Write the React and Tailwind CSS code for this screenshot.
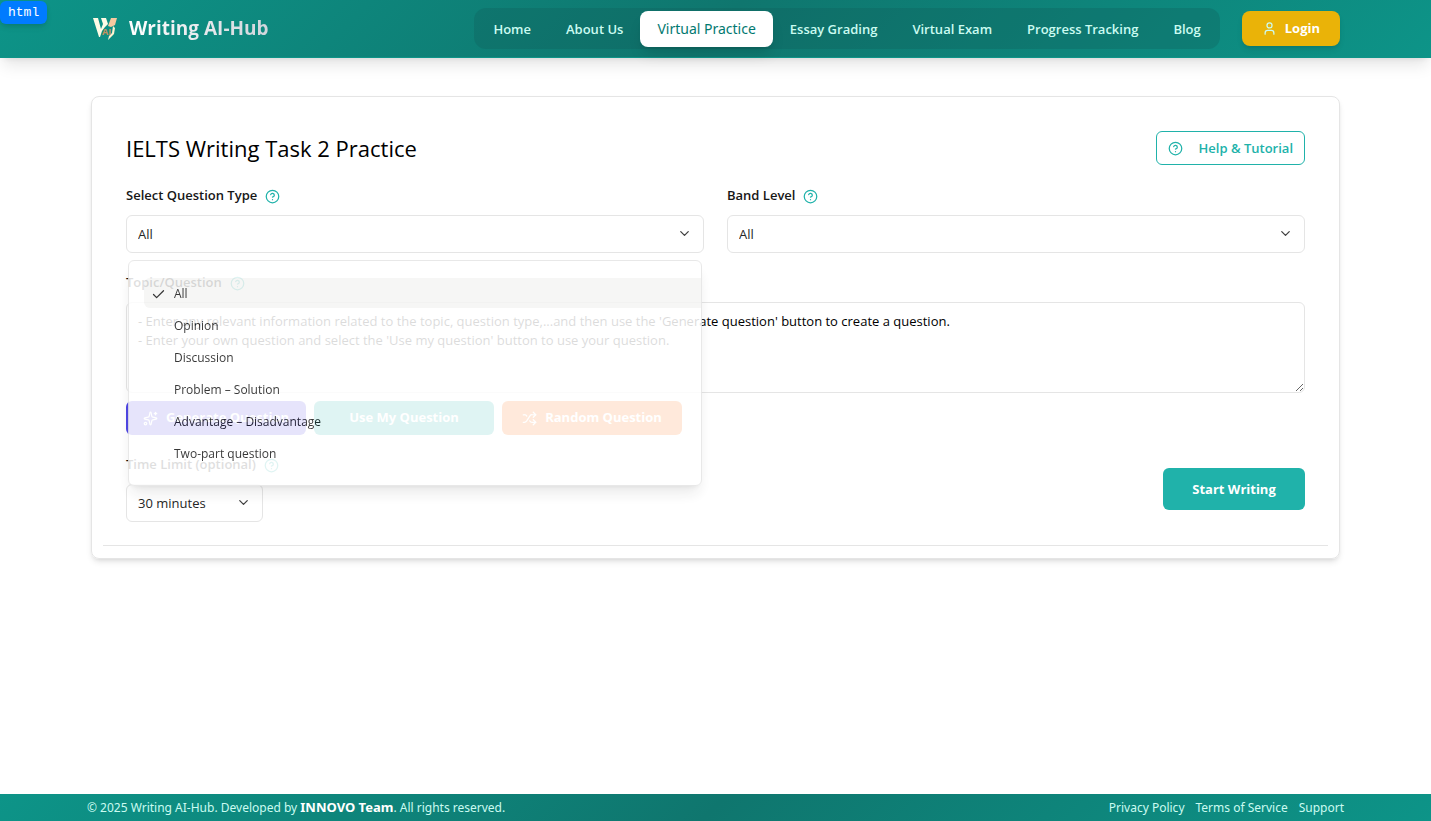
import { useState } from "react";
import { Check, ChevronDown, CircleHelp, Shuffle, Sparkles, User } from "lucide-react";

const navBefore = ["Home", "About Us"];
const navAfter = ["Essay Grading", "Virtual Exam", "Progress Tracking", "Blog"];
const questionTypes = [
  "All",
  "Opinion",
  "Discussion",
  "Problem – Solution",
  "Advantage – Disadvantage",
  "Two-part question",
];
const bandLevels = ["All", "5.0 – 6.0", "6.5 – 7.5", "8.0+"];
const timeLimits = ["30 minutes", "40 minutes", "60 minutes"];

const instructions =
  "- Enter any relevant information related to the topic, question type,...and then use the 'Generate question' button to create a question.\n- Enter your own question and select the 'Use my question' button to use your question.";

function Logo() {
  return (
    <svg viewBox="0 0 28 26" className="h-[26px] w-7" aria-hidden="true">
      <path d="M2 2h5l3 11 2-5-2-6h5l2 6-3 3-3 4-2 6H8z" fill="#fefbe6" />
      <path d="M20 2h6l-2 7-4 2-3-1z" fill="#f7c9a0" />
      <path d="M22 10l2 2-1 6-6 6 1-4 3-3z" fill="#fdf3cf" />
      <text x="11" y="19" fontSize="9" fontWeight="700" fill="#c9915c" fontFamily="Open Sans, sans-serif">
        AI
      </text>
    </svg>
  );
}

function NavLink({ children }) {
  return (
    <a href="#" className="rounded-lg px-[15px] py-2 text-[13px] leading-5 font-semibold text-teal-100">
      {children}
    </a>
  );
}

function FieldLabel({ htmlFor, children }) {
  return (
    <div className="flex h-5 items-center gap-2">
      <label htmlFor={htmlFor} className="text-[13px] font-semibold text-neutral-900">
        {children}
      </label>
      <button type="button" aria-label={`About ${children}`} className="text-[#20b2aa]">
        <CircleHelp size={15} strokeWidth={2} />
      </button>
    </div>
  );
}

function Select({ id, options, value, onChange }) {
  return (
    <div className="relative">
      <select
        id={id}
        value={value}
        onChange={onChange}
        className="h-[38px] w-full appearance-none rounded-md border border-neutral-200 bg-white px-[11px] pt-[2px] text-[13px] text-neutral-800"
      >
        {options.map((o) => (
          <option key={o}>{o}</option>
        ))}
      </select>
      <ChevronDown size={15} className="pointer-events-none absolute top-[11px] right-3 text-neutral-700" />
    </div>
  );
}

export default function App() {
  const [type, setType] = useState("All");
  const [band, setBand] = useState("All");
  const [time, setTime] = useState("30 minutes");
  const [topic, setTopic] = useState(instructions);

  return (
    <div className="flex min-h-screen flex-col bg-white font-['Open_Sans','Noto_Sans',sans-serif]">
      <span className="absolute top-px left-0 rounded-md bg-[#007bff] px-2 py-[2px] font-['Liberation_Mono',monospace] text-[13px] leading-[19px] text-white shadow-md">
        html
      </span>
      <header className="border-b border-[#0d9488] bg-linear-135/srgb from-[#0d9488] via-[#0f766e] to-[#0d9488] shadow-lg">
        <div className="mx-auto flex h-[57px] max-w-[1249px] items-center justify-between">
          <a href="#" className="flex items-center gap-[10px]">
            <Logo />
            <span className="bg-linear-to-r from-white to-gray-300 bg-clip-text text-[19px] font-bold text-transparent">
              Writing AI-Hub
            </span>
          </a>
          <div className="flex items-center gap-[22px]">
            <nav className="flex h-[41px] items-center gap-[5px] rounded-xl bg-[#115e59]/30 px-1">
              {navBefore.map((n) => (
                <NavLink key={n}>{n}</NavLink>
              ))}
              <a
                href="#"
                aria-current="page"
                className="-mx-[3px] rounded-lg bg-white px-[17px] py-2 font-['Noto_Sans',sans-serif] text-sm leading-5 text-teal-700 shadow-lg"
              >
                Virtual Practice
              </a>
              {navAfter.map((n) => (
                <NavLink key={n}>{n}</NavLink>
              ))}
            </nav>
            <button
              type="button"
              className="flex h-[35px] items-center gap-2 rounded-lg bg-[#eab308] px-5 text-[13px] font-bold text-white shadow-md"
            >
              <User size={15} className="text-teal-100" />
              Login
            </button>
          </div>
        </div>
      </header>

      <main className="mx-auto w-full max-w-[1249px] flex-1 pt-[38px]">
        <section className="rounded-lg border border-neutral-200 px-[11px] pb-3 shadow-md">
          <div className="border-b border-neutral-200 px-[23px] pt-[34px] pb-[23px]">
            <div className="flex items-center justify-between">
              <h1 className="text-[22px] leading-8 font-medium text-black">IELTS Writing Task 2 Practice</h1>
              <button
                type="button"
                className="flex h-[34px] items-center gap-4 rounded-md border border-[#20b2aa] px-[11px] pt-px text-[13px] font-semibold text-[#20b2aa]"
              >
                <CircleHelp size={15} />
                Help &amp; Tutorial
              </button>
            </div>

            <div className="mt-[21px] grid grid-cols-2 gap-x-[23px]">
              <div className="relative flex flex-col gap-[9px]">
                <FieldLabel htmlFor="question-type">Select Question Type</FieldLabel>
                <Select
                  id="question-type"
                  options={questionTypes}
                  value={type}
                  onChange={(e) => setType(e.target.value)}
                />
                <ul
                  role="listbox"
                  aria-label="Question types"
                  className="absolute inset-x-[2px] top-full z-10 mt-[7px] flex flex-col gap-[2px] rounded-md border border-neutral-200 bg-white pt-[17px] pb-[17px] pl-[15px] opacity-[0.86] shadow-lg"
                >
                  {questionTypes.map((o) => (
                    <li
                      key={o}
                      role="option"
                      aria-selected={o === type}
                      onClick={() => setType(o)}
                      className="flex h-[30px] items-center gap-2 rounded-l-md pt-[2px] pl-[7px] text-xs text-neutral-900 aria-selected:bg-stone-100"
                    >
                      <span className="w-[15px]">{o === type && <Check size={15} />}</span>
                      {o}
                    </li>
                  ))}
                </ul>
              </div>
              <div className="flex flex-col gap-[9px]">
                <FieldLabel htmlFor="band-level">Band Level</FieldLabel>
                <Select id="band-level" options={bandLevels} value={band} onChange={(e) => setBand(e.target.value)} />
              </div>
            </div>

            <div className="mt-5 flex flex-col gap-[9px]">
              <FieldLabel htmlFor="topic">Topic/Question</FieldLabel>
              <textarea
                id="topic"
                value={topic}
                onChange={(e) => setTopic(e.target.value)}
                className="h-[91px] w-full resize-y rounded-md border border-neutral-200 px-[11px] py-[9px] text-[13px] leading-[19px] text-black"
              />
            </div>

            <div className="mt-2 flex gap-2 text-[13px] font-bold text-white">
              <button type="button" className="flex h-[34px] w-[180px] items-center justify-center gap-2 rounded-md bg-[#4f46e5]">
                <Sparkles size={15} />
                Generate Question
              </button>
              <button type="button" className="flex h-[34px] w-[180px] items-center justify-center rounded-md bg-[#20b2aa]">
                Use My Question
              </button>
              <button type="button" className="flex h-[34px] w-[180px] items-center justify-center gap-2 rounded-md bg-orange-500">
                <Shuffle size={15} />
                Random Question
              </button>
            </div>

            <div className="mt-5 flex items-center justify-between">
              <div className="flex flex-col gap-[9px]">
                <FieldLabel htmlFor="time-limit">Time Limit (optional)</FieldLabel>
                <div className="w-[137px]">
                  <Select id="time-limit" options={timeLimits} value={time} onChange={(e) => setTime(e.target.value)} />
                </div>
              </div>
              <button
                type="button"
                className="h-[42px] w-[142px] rounded-md bg-[#20b2aa] pt-[2px] text-[13px] font-bold text-white"
              >
                Start Writing
              </button>
            </div>
          </div>
        </section>
      </main>

      <footer className="bg-linear-135/srgb from-[#0d9488] via-[#0f766e] to-[#0d9488]">
        <div className="mx-auto flex h-[27px] max-w-[1257px] items-center justify-between font-['Noto_Sans',sans-serif] text-xs text-teal-100">
          <p>
            © 2025 Writing AI-Hub. Developed by <strong className="text-[13px] font-bold text-white">INNOVO Team</strong>. All
            rights reserved.
          </p>
          <div className="flex gap-[11px]">
            <a href="#">Privacy Policy</a>
            <a href="#">Terms of Service</a>
            <a href="#">Support</a>
          </div>
        </div>
      </footer>
    </div>
  );
}
